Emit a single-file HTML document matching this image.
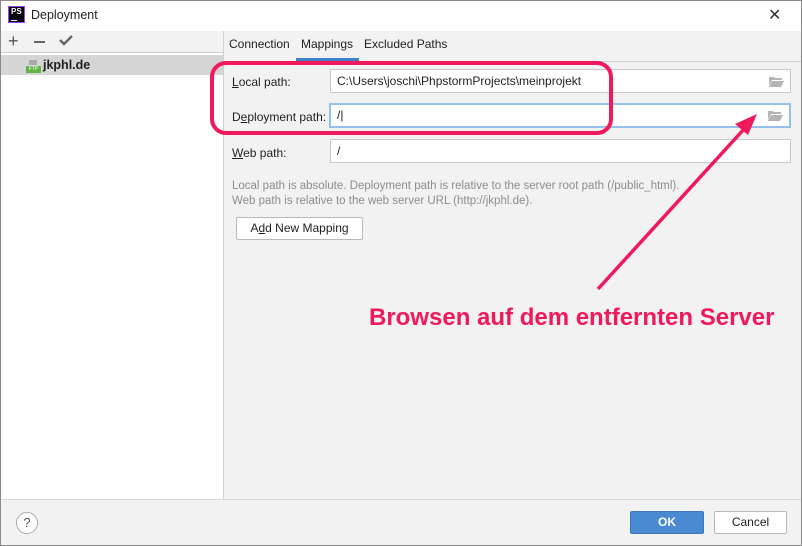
<!DOCTYPE html>
<html><head><style>
*{margin:0;padding:0;box-sizing:border-box}
body{width:802px;height:546px;overflow:hidden;font-family:"Liberation Sans",sans-serif;font-size:12px;color:#1e1e1e;background:#f2f2f2;position:relative}
.a{position:absolute}
.inp{position:absolute;background:#fff;border:1px solid #c8c8c8;height:24px;padding:4px 6px;font-size:12px}
.fold{position:absolute;right:6px;top:6px;width:15px;height:11px}
</style></head><body>
<div class="a" style="left:0;top:0;width:802px;height:546px;border:1px solid #8a8a8a;z-index:5;pointer-events:none"></div>
<div class="a" style="left:0;top:0;width:802px;height:31px;background:#fff"></div>
<div class="a" style="left:8px;top:6px;width:17px;height:17px;background:#000;border:1px solid #a040ff;color:#fff;font-size:8px;font-weight:bold;padding:1px 2px;line-height:8px">PS<div style="width:6px;height:1px;background:#fff;margin-top:4px"></div></div>
<div class="a" style="left:31px;top:8px;font-size:12.5px">Deployment</div>
<div class="a" style="left:768px;top:5px;font-size:16px;color:#333">✕</div>
<div class="a" style="left:0;top:31px;width:223px;height:469px;background:#fff"></div>
<div class="a" style="left:0;top:31px;width:223px;height:22px;background:#f2f2f2;border-bottom:1px solid #d0d0d0"></div>
<div class="a" style="left:8px;top:31px;font-size:18px;color:#555">+</div>
<div class="a" style="left:34px;top:41px;width:11px;height:2px;background:#666"></div>
<svg class="a" style="left:59px;top:34px" width="14" height="12"><path d="M1 6 L5 10 L13 2" stroke="#666" stroke-width="2.4" fill="none"/></svg>
<div class="a" style="left:0;top:55px;width:223px;height:20px;background:#d5d5d5"></div>
<div class="a" style="left:26px;top:60px;width:14px;height:13px"><div style="position:absolute;left:3px;top:0;width:8px;height:5px;background:#aaa"></div><div style="position:absolute;left:0;top:6px;width:15px;height:7px;background:#62b543;color:#fff;font-size:5px;line-height:7px;text-align:center">FTP</div></div>
<div class="a" style="left:43px;top:58px;font-weight:bold;font-size:12.5px">jkphl.de</div>
<div class="a" style="left:223px;top:31px;width:1px;height:469px;background:#d0d0d0"></div>
<div class="a" style="left:229px;top:37px">Connection</div>
<div class="a" style="left:301px;top:37px">Mappings</div>
<div class="a" style="left:364px;top:37px">Excluded Paths</div>
<div class="a" style="left:296px;top:58px;width:63px;height:3px;background:#4083c9"></div>
<div class="a" style="left:224px;top:61px;width:578px;height:1px;background:#d0d0d0"></div>
<div class="a" style="left:232px;top:75px"><u>L</u>ocal path:</div>
<div class="a" style="left:232px;top:110px">D<u>e</u>ployment path:</div>
<div class="a" style="left:232px;top:146px"><u>W</u>eb path:</div>
<div class="inp" style="left:330px;top:69px;width:461px">C:\Users\joschi\PhpstormProjects\meinprojekt<svg class="fold" viewBox="0 0 15 11"><path d="M0 1h5l1 1h7v2H3L0 10z M3 5h12l-3 6H0z" fill="#b4b4b4"/></svg></div>
<div class="inp" style="left:329px;top:103px;width:462px;height:25px;border:2px solid #97bfea;padding:3px 6px">/|<svg class="fold" style="top:5px" viewBox="0 0 15 11"><path d="M0 1h5l1 1h7v2H3L0 10z M3 5h12l-3 6H0z" fill="#b4b4b4"/></svg></div>
<div class="inp" style="left:330px;top:139px;width:461px">/</div>
<div class="a" style="left:232px;top:179px;color:#8c8c8c;font-size:11.5px;line-height:15px">Local path is absolute. Deployment path is relative to the server root path (/public_html).<br>Web path is relative to the web server URL (http://jkphl.de).</div>
<div class="a" style="left:236px;top:217px;width:127px;height:23px;background:#fff;border:1px solid #b8b8b8;border-radius:2px;text-align:center;line-height:21px">A<u>d</u>d New Mapping</div>
<div class="a" style="left:224px;top:499px;width:578px;height:1px;background:#d8d8d8"></div>
<div class="a" style="left:0;top:499px;width:224px;height:1px;background:#d8d8d8"></div>
<div class="a" style="left:16px;top:512px;width:22px;height:22px;border:1px solid #aaa;border-radius:50%;background:#fff;text-align:center;line-height:20px;font-size:13px;color:#555">?</div>
<div class="a" style="left:630px;top:511px;width:74px;height:23px;background:#4a8ad3;border:1px solid #3c78be;border-radius:2px;color:#fff;font-weight:bold;text-align:center;line-height:21px">OK</div>
<div class="a" style="left:714px;top:511px;width:73px;height:23px;background:#fff;border:1px solid #b8b8b8;border-radius:2px;text-align:center;line-height:21px">Cancel</div>
<svg class="a" style="left:0;top:0" width="802" height="546">
<rect x="212" y="63" width="399" height="70" rx="14" fill="none" stroke="#f0195c" stroke-width="4"/>
<line x1="598" y1="289" x2="745" y2="128" stroke="#f0195c" stroke-width="3.5"/>
<path d="M757 114 L735 124 L748 135 Z" fill="#f0195c"/>
</svg>
<div class="a" style="left:369px;top:304px;font-size:24px;font-weight:bold;color:#f0195c">Browsen auf dem entfernten Server</div>
</body></html>
